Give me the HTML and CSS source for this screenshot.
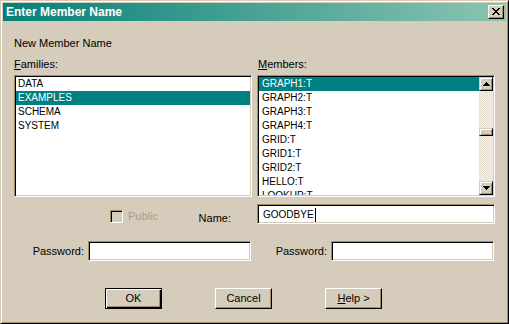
FILE: index.html
```html
<!DOCTYPE html>
<html>
<head>
<meta charset="utf-8">
<title>Enter Member Name</title>
<link rel="stylesheet" href="styles.css">
</head>
<body>
<div class="window">
  <div class="titlebar">
    <span class="title">Enter Member Name</span>
    <div class="close"><svg width="8" height="7" viewBox="0 0 8 7" shape-rendering="crispEdges"><path d="M0 0h2v1H0zM6 0h2v1H6zM1 1h2v1H1zM5 1h2v1H5zM2 2h4v1H2zM3 3h2v1H3zM2 4h4v1H2zM1 5h2v1H1zM5 5h2v1H5zM0 6h2v1H0zM6 6h2v1H6z" fill="#000"/></svg></div>
  </div>
  <div class="content">
    <div class="heading">New Member Name</div>
    <div class="pair lists">
      <div class="col">
        <div class="label"><u>F</u>amilies:</div>
        <div class="listbox">
          <div class="rows">
            <div class="row">DATA</div>
            <div class="row sel">EXAMPLES</div>
            <div class="row">SCHEMA</div>
            <div class="row">SYSTEM</div>
          </div>
        </div>
      </div>
      <div class="col">
        <div class="label"><u>M</u>embers:</div>
        <div class="listbox">
          <div class="rows">
            <div class="row sel">GRAPH1:T</div>
            <div class="row">GRAPH2:T</div>
            <div class="row">GRAPH3:T</div>
            <div class="row">GRAPH4:T</div>
            <div class="row">GRID:T</div>
            <div class="row">GRID1:T</div>
            <div class="row">GRID2:T</div>
            <div class="row">HELLO:T</div>
            <div class="row">LOOKUP:T</div>
          </div>
          <div class="scrollbar">
            <div class="sbtn"><svg width="7" height="4" viewBox="0 0 7 4" shape-rendering="crispEdges"><path d="M3 0h1v1h1v1h1v1h1v1H0V3h1V2h1V1h1z" fill="#000"/></svg></div>
            <div class="track"><div class="thumb"></div></div>
            <div class="sbtn"><svg width="7" height="4" viewBox="0 0 7 4" shape-rendering="crispEdges"><path d="M0 0h7v1H6v1H5v1H4v1H3V3H2V2H1V1H0z" fill="#000"/></svg></div>
          </div>
        </div>
      </div>
    </div>
    <div class="pair row2">
      <div class="cell left2">
        <span class="checkbox"></span>
        <span class="public">Public</span>
        <span class="namelabel">Name:</span>
      </div>
      <div class="cell">
        <div class="field namefield">GOODBYE<span class="caret"></span></div>
      </div>
    </div>
    <div class="pair row3">
      <div class="cell pw">
        <span class="pwlabel">Password:</span>
        <div class="field pwfield"></div>
      </div>
      <div class="cell pw">
        <span class="pwlabel">Password:</span>
        <div class="field pwfield"></div>
      </div>
    </div>
    <div class="buttons">
      <div class="btn default">OK</div>
      <div class="btn">Cancel</div>
      <div class="btn"><u>H</u>elp &gt;</div>
    </div>
  </div>
</div>
</body>
</html>
```
FILE: styles.css
```css
html, body {
  margin: 0;
  padding: 0;
  background: #d5ccbb;
}
body {
  font-family: "Liberation Sans", Arial, sans-serif;
  font-size: 11px;
  color: #000;
}
u {
  text-decoration: underline;
  text-underline-offset: 1px;
}
.window {
  box-sizing: border-box;
  width: 509px;
  height: 324px;
  border: 1px solid;
  border-color: #d5ccbb #000 #000 #d5ccbb;
  box-shadow: inset 1px 1px #fff, inset -1px -1px #a28d68;
  padding: 2px;
  display: flex;
  flex-direction: column;
  background: #d5ccbb;
}
.titlebar {
  height: 18px;
  flex: none;
  display: flex;
  align-items: center;
  justify-content: space-between;
  padding: 0 2px 0 3px;
  background: linear-gradient(to right, #058078, #8cc4b1);
}
.title {
  color: #fff;
  font-weight: bold;
  font-size: 12px;
  line-height: 18px;
}
.close {
  box-sizing: border-box;
  width: 16px;
  height: 14px;
  background: #d5ccbb;
  border: 1px solid;
  border-color: #fff #000 #000 #fff;
  box-shadow: inset -1px -1px #a28d68;
  display: flex;
  align-items: center;
  justify-content: center;
  padding: 0 1px 1px 0;
}
.close svg { display: block; }
.content {
  flex: 1;
  padding-left: 11px;
}
.heading {
  margin-top: 16px;
  line-height: 13px;
}
.pair {
  display: grid;
  grid-template-columns: 238px 238px;
  column-gap: 5px;
}
.lists { margin-top: 8px; }
.label {
  line-height: 13px;
  margin-bottom: 4px;
}
.col:last-child .label { padding-left: 1px; }
.listbox {
  box-sizing: border-box;
  height: 122px;
  background: #fff;
  border: 1px solid;
  border-color: #a28d68 #fff #fff #a28d68;
  box-shadow: inset 1px 1px #000, inset -1px -1px #d5ccbb;
  padding: 1px;
  display: flex;
  overflow: hidden;
}
.rows {
  flex: 1;
  overflow: hidden;
}
.row {
  height: 14px;
  line-height: 14px;
  font-size: 10px;
  padding-left: 2px;
  white-space: nowrap;
}
.col:last-child .row { padding-left: 3px; }
.row.sel {
  background: #008080;
  color: #fff;
}
.scrollbar {
  width: 14px;
  flex: none;
  display: flex;
  flex-direction: column;
}
.sbtn {
  box-sizing: border-box;
  width: 14px;
  height: 14px;
  background: #d5ccbb;
  border: 1px solid;
  border-color: #d5ccbb #000 #000 #d5ccbb;
  box-shadow: inset 1px 1px #fff, inset -1px -1px #a28d68;
  display: flex;
  align-items: center;
  justify-content: center;
}
.sbtn svg { display: block; }
.track {
  flex: 1;
  background: repeating-conic-gradient(#f6f2ec 0 25%, #e3dccf 0 50%) 0 0 / 2px 2px;
}
.thumb {
  box-sizing: border-box;
  margin-top: 37px;
  height: 8px;
  background: #d5ccbb;
  border: 1px solid;
  border-color: #d5ccbb #000 #000 #d5ccbb;
  box-shadow: inset 1px 1px #fff, inset -1px -1px #a28d68;
}
.row2 {
  margin-top: 7px;
  height: 20px;
}
.cell {
  display: flex;
}
.left2 {
  align-items: flex-start;
  padding-left: 96px;
}
.checkbox {
  box-sizing: border-box;
  width: 13px;
  height: 13px;
  margin-top: 6px;
  background: #d5ccbb;
  border: 1px solid;
  border-color: #a28d68 #fff #fff #a28d68;
  box-shadow: inset 1px 1px #000, inset -1px -1px #d5ccbb;
}
.public {
  margin-left: 5px;
  margin-top: 6px;
  line-height: 13px;
  color: #a89c86;
}
.namelabel {
  margin-left: auto;
  margin-right: 21px;
  margin-top: 8px;
  line-height: 13px;
}
.field {
  box-sizing: border-box;
  height: 20px;
  background: #fff;
  border: 1px solid;
  border-color: #a28d68 #fff #fff #a28d68;
  box-shadow: inset 1px 1px #000, inset -1px -1px #d5ccbb;
}
.namefield {
  width: 239px;
  padding: 2px 0 0 5px;
  font-size: 10px;
  line-height: 16px;
  display: flex;
  align-items: center;
}
.caret {
  display: inline-block;
  width: 1px;
  height: 14px;
  background: #000;
  margin-left: 1px;
  margin-top: -1px;
}
.row3 {
  margin-top: 17px;
}
.pw {
  justify-content: flex-end;
  align-items: center;
  padding-right: 1px;
  gap: 4px;
}
.pwlabel {
  line-height: 13px;
  padding-top: 1px;
}
.pwfield {
  width: 163px;
}
.buttons {
  margin-top: 27px;
  display: flex;
  padding-left: 91px;
  column-gap: 53px;
}
.btn {
  box-sizing: border-box;
  width: 57px;
  height: 21px;
  border: 1px solid;
  border-color: #fff #000 #000 #fff;
  box-shadow: inset -1px -1px #a28d68;
  display: flex;
  align-items: center;
  justify-content: center;
  line-height: 13px;
  padding-bottom: 1px;
}
.btn.default {
  border-color: #000;
  box-shadow: inset 1px 1px #fff, inset -1px -1px #000, inset -2px -2px #a28d68;
}
```
